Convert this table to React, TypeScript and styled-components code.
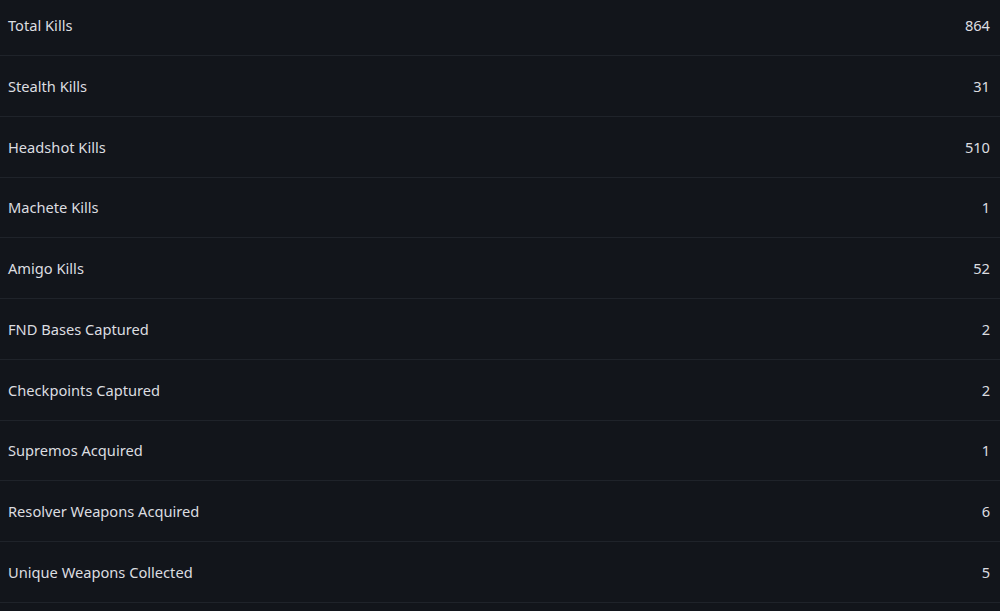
import React from "react";
import styled, { createGlobalStyle } from "styled-components";

const GlobalStyle = createGlobalStyle`
  html, body {
    margin: 0;
    padding: 0;
    background: #12151b;
    overflow: hidden;
  }
  body {
    font-family: "Noto Sans", "Open Sans", sans-serif;
  }
`

const Wrapper = styled.section`
  width: 1000px;
  height: 611px;
  overflow: hidden;
  background: #12151b;
  > .list {
    margin-top: -4.8px;
  }
`

const Row = styled.div`
  display: flex;
  align-items: center;
  justify-content: space-between;
  box-sizing: border-box;
  height: 60.78px;
  padding: 0 10px 0 8px;
  border-bottom: 1px solid #1f232a;
  color: #dcdde0;
  font-size: 14.65px;
`

type Stat = { label: string, value: number }

const stats: Stat[] = [
    {label: 'Total Kills', value: 864},
    {label: 'Stealth Kills', value: 31},
    {label: 'Headshot Kills', value: 510},
    {label: 'Machete Kills', value: 1},
    {label: 'Amigo Kills', value: 52},
    {label: 'FND Bases Captured', value: 2},
    {label: 'Checkpoints Captured', value: 2},
    {label: 'Supremos Acquired', value: 1},
    {label: 'Resolver Weapons Acquired', value: 6},
    {label: 'Unique Weapons Collected', value: 5},
]

const App: React.FC = () => {
    return (
        <Wrapper>
            <GlobalStyle/>
            <div className="list">
                {stats.map(s =>
                    <Row key={s.label}>
                        <span>{s.label}</span>
                        <span>{s.value}</span>
                    </Row>
                )}
            </div>
        </Wrapper>
    )
}

export default App
